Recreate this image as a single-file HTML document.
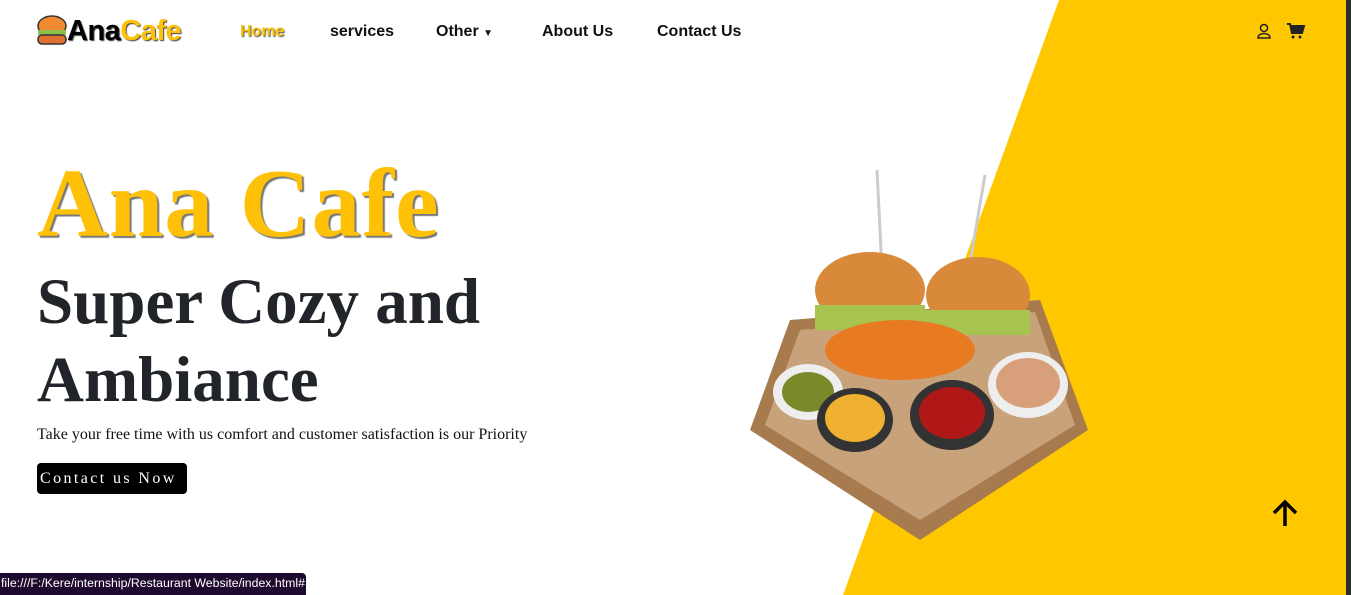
<!DOCTYPE html>
<html><head><meta charset="utf-8"><style>
*{margin:0;padding:0;box-sizing:border-box}
body{width:1351px;height:595px;overflow:hidden;background:#fff;position:relative;font-family:"Liberation Sans",sans-serif}
.bg{position:absolute;left:0;top:0}
.sb{position:absolute;right:0;top:0;width:5px;height:595px;background:#2b2b2b}
nav a{position:absolute;top:23px;font-size:16px;font-weight:bold;color:#111;text-decoration:none}
.logo{position:absolute;left:67px;top:15px;font-size:29px;font-weight:bold;letter-spacing:-0.5px;text-shadow:1px 1px 1px #444}
h1{position:absolute;left:37px;top:148px;font-family:"Liberation Serif",serif;font-size:98px;color:#FFC107;font-weight:bold;text-shadow:2px 2px 1px #777;letter-spacing:1px}
h2{position:absolute;left:37px;top:263px;font-family:"Liberation Serif",serif;font-size:65px;color:#212529;font-weight:bold;line-height:78px}
p{position:absolute;left:37px;top:426px;font-family:"Liberation Serif",serif;font-size:16px;color:#111}
.btn{position:absolute;left:37px;top:463px;width:150px;height:31px;background:#000;border-radius:4px;color:#fff;font-family:"Liberation Serif",serif;font-size:16px;letter-spacing:2.4px;padding:7px 0 0 3px}
.status{position:absolute;left:0;top:573px;width:306px;height:22px;background:#1e0a2e;color:#fff;font-size:12.3px;padding:3px 0 0 1px;border-radius:0 4px 0 0;white-space:nowrap;overflow:hidden}
</style></head><body>
<svg class="bg" width="1351" height="595"><polygon points="1059,0 1346,0 1346,595 843,595" fill="#FFC700"/>
<g>
<line x1="877" y1="170" x2="882" y2="270" stroke="#ccc" stroke-width="3"/>
<line x1="985" y1="175" x2="968" y2="275" stroke="#ccc" stroke-width="3"/>
<polygon points="790,320 1040,300 1088,430 920,540 750,430" fill="#a87b4f"/>
<polygon points="800,330 1035,312 1075,425 920,520 765,425" fill="#c8a27a"/>
<ellipse cx="870" cy="290" rx="55" ry="38" fill="#d88a3a"/>
<ellipse cx="978" cy="295" rx="52" ry="38" fill="#d88a3a"/>
<rect x="815" y="305" width="110" height="25" fill="#a7c44e"/>
<rect x="925" y="310" width="105" height="25" fill="#a7c44e"/>
<ellipse cx="900" cy="350" rx="75" ry="30" fill="#e87a22"/>
<ellipse cx="808" cy="392" rx="35" ry="28" fill="#eee"/><ellipse cx="808" cy="392" rx="26" ry="20" fill="#7a8a2a"/>
<ellipse cx="855" cy="420" rx="38" ry="32" fill="#333"/><ellipse cx="855" cy="418" rx="30" ry="24" fill="#f0b030"/>
<ellipse cx="952" cy="415" rx="42" ry="35" fill="#333"/><ellipse cx="952" cy="413" rx="33" ry="26" fill="#b01818"/>
<ellipse cx="1028" cy="385" rx="40" ry="33" fill="#eee"/><ellipse cx="1028" cy="383" rx="32" ry="25" fill="#d8a07a"/>
</g>
<path d="M1285 502v24M1274 513l11-11 11 11" stroke="#000" stroke-width="3.5" fill="none"/>
<g stroke="#222" stroke-width="1.5" fill="none"><circle cx="1264" cy="28" r="3.5"/><path d="M1258 38c0-6 12-6 12 0z"/></g>
<path d="M1287 24h3l2 9h10l2-7h-13" stroke="#222" stroke-width="2" fill="#222"/><circle cx="1293" cy="37" r="1.5" fill="#222"/><circle cx="1300" cy="37" r="1.5" fill="#222"/>
<g><ellipse cx="52" cy="26" rx="14" ry="10" fill="#f08a30" stroke="#333" stroke-width="1.5"/><rect x="38" y="30" width="28" height="5" fill="#8fc04a"/><rect x="38" y="35" width="28" height="9" rx="4" fill="#e07030" stroke="#333" stroke-width="1.5"/></g>
</svg>
<div class="sb"></div>
<div class="logo"><span style="color:#000">Ana</span><span style="color:#FFC107">Cafe</span></div>
<nav><a style="left:240px;color:#FFC107;text-shadow:1px 1px 1px #555">Home</a><a style="left:330px">services</a><a style="left:436px">Other <span style="font-size:10px">▼</span></a><a style="left:542px">About Us</a><a style="left:657px">Contact Us</a></nav>
<h1>Ana Cafe</h1>
<h2>Super Cozy and<br>Ambiance</h2>
<p>Take your free time with us comfort and customer satisfaction is our Priority</p>
<div class="btn">Contact us Now</div>
<div class="status">file:///F:/Kere/internship/Restaurant Website/index.html#</div>
</body></html>
